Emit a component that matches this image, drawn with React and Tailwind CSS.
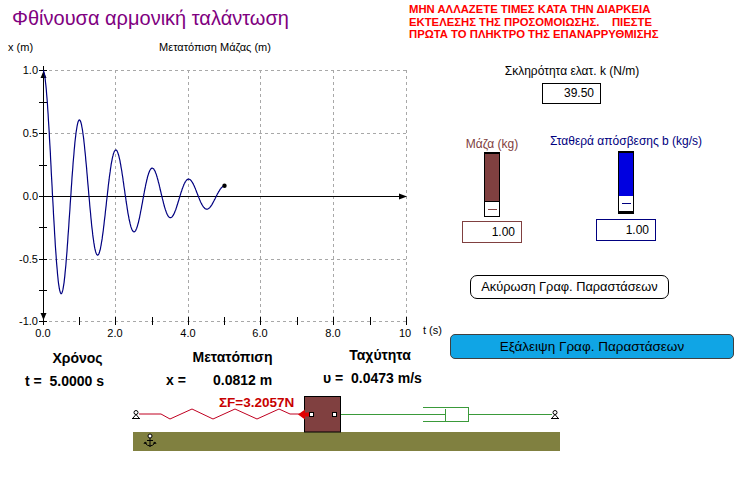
import React from "react";

// damped oscillator used by the plot: k = 39.5 N/m, m = 1 kg, b = 1 kg/s
const OMEGA = Math.sqrt(39.5 - 0.25);
const T0_X = 43;
const PX_PER_S = 36.3;
const ZERO_Y = 196;
const PX_PER_M = 125.5;

function position(t) {
  return Math.exp(-0.5 * t) * (Math.cos(OMEGA * t) + (0.5 / OMEGA) * Math.sin(OMEGA * t));
}

function curvePath() {
  let d = "";
  for (let i = 0; i <= 500; i++) {
    const t = i / 100;
    const x = T0_X + t * PX_PER_S;
    const y = ZERO_Y - position(t) * PX_PER_M;
    d += (i ? "L" : "M") + x.toFixed(1) + " " + y.toFixed(1);
  }
  return d;
}

const gridX = [115.5, 188.5, 260.5, 333.5, 406.5];
const gridY = [70.5, 133.5, 259.5, 321.5];
const minorY = [102.5, 165.5, 227.5, 290.5];
const minorX = [79.5, 152.5, 224.5, 297.5, 370.5];

const yLabels = [
  ["1.0", 70],
  ["0.5", 133],
  ["0.0", 196],
  ["-0.5", 259],
  ["-1.0", 321],
];
const xLabels = [
  ["0.0", 43],
  ["2.0", 115],
  ["4.0", 188],
  ["6.0", 260],
  ["8.0", 333],
  ["10", 405],
];

function Chart() {
  const endX = T0_X + 5 * PX_PER_S;
  const endY = ZERO_Y - position(5) * PX_PER_M;
  return (
    <svg width="450" height="302" viewBox="0 40 450 302" className="block">
      <g fontFamily="Liberation Sans, Arial, sans-serif" fontSize="11" fill="#000">
        <text x="8" y="51">x (m)</text>
        <text x="215" y="51" textAnchor="middle">Μετατόπιση Μάζας (m)</text>
        {yLabels.map(([l, y]) => (
          <text key={l} x="38" y={y + 4} textAnchor="end">{l}</text>
        ))}
        {xLabels.map(([l, x]) => (
          <text key={l + x} x={x} y="337" textAnchor="middle">{l}</text>
        ))}
        <text x="423" y="334">t (s)</text>
      </g>

      {/* grid */}
      <g stroke="#a8a8a8" strokeDasharray="3 3" shapeRendering="crispEdges">
        {gridX.map((x) => (
          <line key={x} x1={x} y1="70" x2={x} y2="325" />
        ))}
        {gridY.map((y) => (
          <line key={y} x1="43" y1={y} x2="407" y2={y} />
        ))}
      </g>

      {/* axes */}
      <g stroke="#000" shapeRendering="crispEdges">
        <line x1="43.5" y1="66" x2="43.5" y2="325" />
        <line x1="43" y1="196.5" x2="404" y2="196.5" />
        {[70.5, 133.5, 196.5, 259.5, 321.5, ...minorY].map((y) => (
          <line key={y} x1="39" y1={y} x2="47" y2={y} />
        ))}
        {[...minorX, ...gridX].map((x) => (
          <line key={x} x1={x} y1="317" x2={x} y2="325" />
        ))}
      </g>
      <polygon points="43.5,71 40.5,78 46.5,78" fill="#000" />
      <polygon points="43.5,320 40.5,313 46.5,313" fill="#000" />
      <polygon points="407,196.5 399,193.5 399,199.5" fill="#000" />

      <path d={curvePath()} fill="none" stroke="#000080" strokeWidth="1.2" />
      <circle cx={endX} cy={endY} r="2.2" fill="#000" />
    </svg>
  );
}

function Readouts() {
  return (
    <div className="flex h-[50px] text-[14px] font-bold leading-[16px] text-black">
      <div className="w-[155px] flex flex-col pt-[8px]">
        <div className="text-center">Χρόνος</div>
        <div className="mt-[7px] pl-[25px] whitespace-pre">t =  5.0000 s</div>
      </div>
      <div className="w-[155px] flex flex-col pt-[7px]">
        <div className="text-center">Μετατόπιση</div>
        <div className="mt-[7px] pl-[11px] flex">
          <span className="w-[47px]">x =</span>
          <span>0.0812 m</span>
        </div>
      </div>
      <div className="w-[140px] flex flex-col pt-[5px]">
        <div className="text-center">Ταχύτητα</div>
        <div className="mt-[7px] pl-[13px] whitespace-pre">υ =  0.0473 m/s</div>
      </div>
    </div>
  );
}

function Controls() {
  return (
    <div className="flex-1 flex flex-col text-[12px]">
      <div className="ml-[42px] w-[160px] mt-[25px] h-[13px] leading-[13px] text-center">
        Σκληρότητα ελατ. k (N/m)
      </div>
      <div className="ml-[92px] mt-[5px] w-[59px] h-[21px] border border-black text-right pr-[6px] leading-[19px]">
        39.50
      </div>

      <div className="flex items-start">
        {/* mass */}
        <div className="w-[84px] mt-[34px] flex flex-col items-center">
          <div className="h-[13px] leading-[13px] text-[#804040]">Μάζα (kg)</div>
          <div className="mt-[1px] w-[16px] h-[65px] border border-black border-t-[2px] flex flex-col">
            <div className="flex-1 bg-[#804040]" />
            <div className="h-[15px] bg-white border-t border-black flex items-center justify-center">
              <div className="w-[9px] h-px bg-[#804040]" />
            </div>
          </div>
          <div className="mt-[4px] w-[60px] h-[22px] border border-[#804040] text-right pr-[6px] leading-[20px]">
            1.00
          </div>
        </div>

        {/* damping */}
        <div className="ml-[16px] w-[152px] mt-[31px] flex flex-col items-center">
          <div className="h-[13px] leading-[13px] text-[#000080] whitespace-nowrap">
            Σταθερά απόσβεσης b (kg/s)
          </div>
          <div className="mt-[3px] w-[16px] h-[63px] border-x border-black border-t-[2px] border-b-[3px] flex flex-col">
            <div className="flex-1 bg-[#0000e0]" />
            <div className="h-[15px] bg-white flex items-center justify-center">
              <div className="w-[9px] h-px bg-[#000080]" />
            </div>
          </div>
          <div className="mt-[5px] w-[60px] h-[22px] border border-[#000080] text-right pr-[6px] leading-[20px]">
            1.00
          </div>
        </div>
      </div>

      <button className="ml-[20px] mt-[32px] w-[199px] h-[24px] rounded-[7px] border border-black bg-white text-[12.8px] leading-[22px] text-black whitespace-nowrap">
        Ακύρωση Γραφ. Παραστάσεων
      </button>
      <button className="mt-[35px] w-[284px] h-[25px] rounded-[5px] border border-[#404040] bg-[#10a5e5] text-[13.5px] leading-[23px] text-black whitespace-nowrap">
        Εξάλειψη Γραφ. Παραστάσεων
      </button>
    </div>
  );
}

function Hinge({ x }) {
  return (
    <g stroke="#000" strokeWidth="1" fill="none">
      <circle cx={x} cy="412.5" r="2" fill="#fff" />
      <path d={`M${x} 414.5 L${x - 3} 418 M${x} 414.5 L${x + 3} 418`} />
      <line x1={x - 4} y1="418.5" x2={x + 4} y2="418.5" />
    </g>
  );
}

function Diagram() {
  return (
    <svg width="755" height="85" viewBox="0 392 755 85" className="block">
      {/* ground */}
      <rect x="133" y="432" width="427" height="19" fill="#808040" />
      <g stroke="#000" fill="none" strokeWidth="1">
        <line x1="150" y1="438" x2="150" y2="447" />
        <line x1="147" y1="440.5" x2="153" y2="440.5" />
        <path d="M145 443 Q150 449 155 443" />
        <path d="M144 444 L145 442 L147 443.5 M156 444 L155 442 L153 443.5" />
        <circle cx="150" cy="436" r="2" fill="#fff" />
      </g>

      {/* spring */}
      <polyline
        points="139,414 161,414 170,419 192,409 213,419 235,409 257,419 279,409 290,414 304,414"
        fill="none"
        stroke="#c00020"
        strokeWidth="1"
      />
      <Hinge x={136} />

      {/* damper */}
      <g stroke="#3a9a3a" strokeWidth="1" fill="none" shapeRendering="crispEdges">
        <line x1="336" y1="414.5" x2="445" y2="414.5" />
        <line x1="445.5" y1="409" x2="445.5" y2="421" />
        <line x1="423" y1="407.5" x2="468" y2="407.5" />
        <line x1="423" y1="421.5" x2="468" y2="421.5" />
        <line x1="468.5" y1="407" x2="468.5" y2="422" />
        <line x1="468" y1="414.5" x2="552" y2="414.5" />
      </g>
      <Hinge x={555} />

      {/* mass */}
      <rect x="304.5" y="396.5" width="36" height="35.5" fill="#804040" stroke="#000" />
      <rect x="309.5" y="412.5" width="4" height="4" fill="#fff" stroke="#000" />
      <rect x="332.5" y="412.5" width="4" height="4" fill="#fff" stroke="#000" />

      {/* force arrow */}
      <polygon points="298,414.5 305,409.5 305,419.5" fill="#e00000" />
      <rect x="304" y="412.5" width="5" height="4" fill="#e00000" />
      <text
        x="219"
        y="407"
        fontFamily="Liberation Sans, Arial, sans-serif"
        fontSize="13.5"
        fontWeight="bold"
        fill="#c80000"
      >
        ΣF=3.2057N
      </text>
    </svg>
  );
}

export default function App() {
  return (
    <div className="w-[755px] h-[477px] bg-white overflow-hidden font-['Liberation_Sans',Arial,sans-serif] text-black">
      <div className="flex h-[40px]">
        <h1 className="w-[409px] pl-[12px] pt-[8px] text-[20px] leading-none text-[#800080] whitespace-nowrap">
          Φθίνουσα αρμονική ταλάντωση
        </h1>
        <div className="pt-[3px] text-[11.3px] font-bold leading-[12.5px] text-[#ff0000] whitespace-pre">
          {"ΜΗΝ ΑΛΛΑΖΕΤΕ ΤΙΜΕΣ ΚΑΤΑ ΤΗΝ ΔΙΑΡΚΕΙΑ\nΕΚΤΕΛΕΣΗΣ ΤΗΣ ΠΡΟΣΟΜΟΙΩΣΗΣ.    ΠΙΕΣΤΕ\nΠΡΩΤΑ ΤΟ ΠΛΗΚΤΡΟ ΤΗΣ ΕΠΑΝΑΡΡΥΘΜΙΣΗΣ"}
        </div>
      </div>

      <div className="flex h-[352px]">
        <div className="w-[450px] flex flex-col">
          <Chart />
          <Readouts />
        </div>
        <Controls />
      </div>

      <Diagram />
    </div>
  );
}
